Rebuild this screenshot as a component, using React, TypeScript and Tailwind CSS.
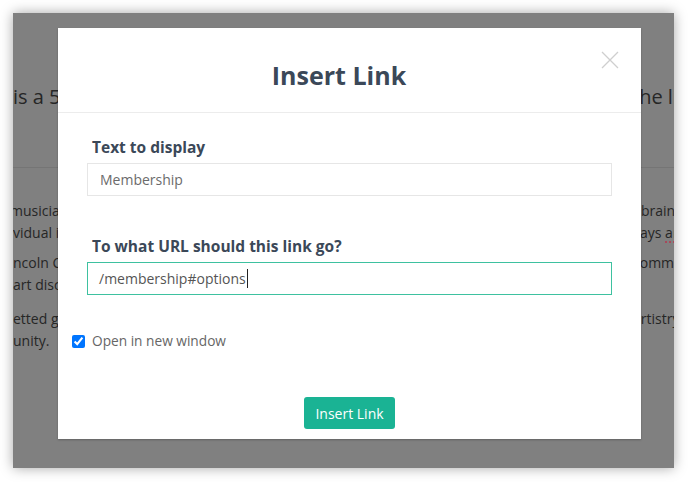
import React from 'react'

const font = { fontFamily: '"Open Sans", "Noto Sans", sans-serif' }

// one line of the page behind the overlay: only the strips left and right of the dialog show
function BgLine({
  left,
  right,
  leftShift = '',
  rightShift = '',
  className = '',
  spell,
}: {
  left: string
  right: string
  leftShift?: string
  rightShift?: string
  className?: string
  spell?: string
}) {
  return (
    <div className={`flex whitespace-nowrap ${className}`}>
      <div className="w-[45px] shrink-0 overflow-hidden">
        <span className={`inline-block ${leftShift}`}>{left}</span>
      </div>
      <div className="w-[583px] shrink-0" />
      <div className="flex-1">
        <span className={`inline-block ${rightShift}`}>
          {right}
          {spell && (
            <span className="underline decoration-dotted decoration-2 decoration-[#a8485a] underline-offset-[3px]">
              {spell}
            </span>
          )}
        </span>
      </div>
    </div>
  )
}

function CloseIcon() {
  return (
    <svg width="18" height="18" viewBox="0 0 18 18" fill="none">
      <path d="M1 1 L17 17 M17 1 L1 17" stroke="#cfcfcf" strokeWidth="1.3" />
    </svg>
  )
}

export default function App() {
  return (
    <div className="w-[688px] h-[482px] bg-white p-[13px]" style={font}>
      <div className="relative w-[661px] h-[455px] overflow-hidden bg-[#808080] shadow-[0_0_12px_rgba(0,0,0,0.35)] text-[#262626]">
        {/* page behind the overlay */}
        <div className="pt-[70px]">
          <BgLine
            left="is a 5-day"
            right="the link"
            rightShift="-ml-[9px]"
            className="text-[20px] leading-[28px]"
          />
          <div className="mt-[56px] border-t border-[#757575]" />
          <div className="mt-[32px] text-[14px] leading-[22px]">
            <BgLine left="musicians" right="brain" leftShift="-ml-[3px]" />
            <BgLine left="vidual in" right="ays " rightShift="-ml-[1px]" spell="are" />
            <BgLine left="ncoln Center" right="community" className="mt-[8px]" rightShift="-ml-[8px]" />
            <BgLine left="art disciplines" right="" />
            <BgLine left="etted group" right="artistry" className="mt-[12px]" rightShift="-ml-[8px]" />
            <BgLine left="unity." right="" />
          </div>
        </div>

        {/* dialog */}
        <div className="absolute left-[45px] top-[15px] w-[583px] h-[411px] bg-white shadow-[0_1px_2px_rgba(0,0,0,0.25)] flex flex-col">
          <button className="absolute top-[23px] right-[22px]">
            <CloseIcon />
          </button>

          <div className="h-[85px] shrink-0 border-b border-[#ececec] pt-[28px] pr-[21px] flex justify-center">
            <h1 className="text-[25px] leading-[38px] font-bold text-[#3b4858]">Insert Link</h1>
          </div>

          <div className="flex flex-col px-[29px] pt-[24px]">
            <label className="pl-[5px] text-[15.5px] leading-[20px] font-bold text-[#3b4858]">
              Text to display
            </label>
            <div className="mt-[6px] h-[33px] border border-[#e6e6e6] px-[12px] flex items-center text-[14px] text-[#6b6b6b]">
              Membership
            </div>

            <label className="mt-[40px] pl-[5px] text-[15.5px] leading-[20px] font-bold text-[#3b4858]">
              To what URL should this link go?
            </label>
            <div className="mt-[6px] h-[33px] border border-[#3ec1a0] px-[11px] flex items-center text-[14px] text-[#555555]">
              /membership#options
              <span className="ml-[1px] w-px h-[19px] bg-[#222222]" />
            </div>

            <div className="mt-[36px] -ml-[15px] h-[20px] flex items-center gap-[7px]">
              <input type="checkbox" checked readOnly className="w-[13px] h-[13px]" />
              <span className="text-[13.7px] leading-[20px] text-[#666666]">Open in new window</span>
            </div>

            <button className="mt-[46px] self-center w-[91px] h-[32px] rounded-[3px] bg-[#1ab394] text-white text-[14px]">
              Insert Link
            </button>
          </div>
        </div>
      </div>
    </div>
  )
}
